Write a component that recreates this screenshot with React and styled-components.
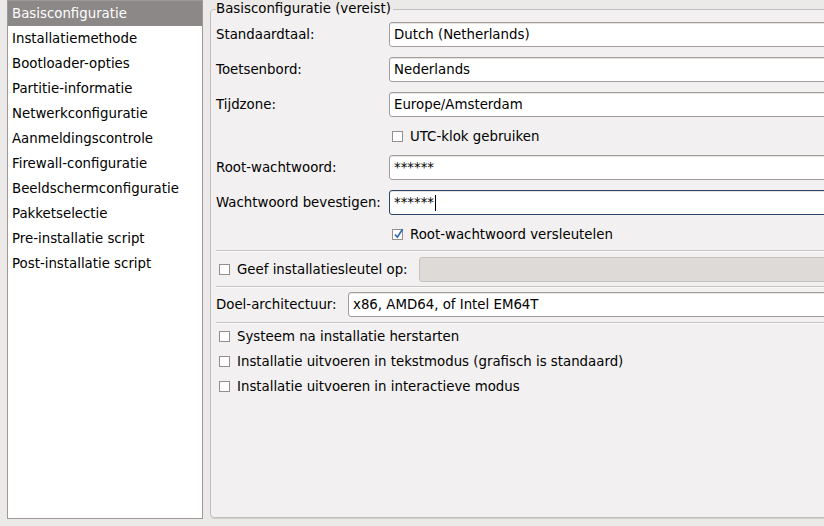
import React from 'react';
import styled, { createGlobalStyle } from 'styled-components';

const Global = createGlobalStyle`
  html, body { margin: 0; padding: 0; overflow: hidden; background: #eceae8; }
  body {
    font-family: "DejaVu Sans", "Liberation Sans", sans-serif;
    font-size: 13.33px;
    color: #000;
  }
  #root { width: 824px; height: 526px; overflow: hidden; }
`;

const Window = styled.div`
  display: flex;
  align-items: flex-start;
  gap: 7px;
  padding-left: 7px;
  width: 824px;
  height: 526px;
  box-sizing: border-box;
  overflow: hidden;
`;

const NavList = styled.ul`
  list-style: none;
  margin: 0;
  padding: 0;
  flex: none;
  width: 196px;
  height: 519px;
  box-sizing: border-box;
  background: #fff;
  border: 1px solid #9e9897;
`;

const NavItem = styled.li`
  height: 25px;
  line-height: 25px;
  padding-left: 4px;
  white-space: nowrap;
  background: ${p => (p.$selected ? '#8c8887' : 'transparent')};
  color: ${p => (p.$selected ? '#fff' : '#000')};
`;

const Frame = styled.fieldset`
  margin: 0;
  flex: none;
  width: 640px;
  height: 518px;
  box-sizing: border-box;
  border: 1px solid #c2bebc;
  border-radius: 4px;
  background: #f2f0f0;
  padding: 4px 0 0 5px;
  min-inline-size: auto;
  display: flex;
  flex-direction: column;
  box-shadow: 0 1px 0 #d2cfcd;
`;

const Legend = styled.legend`
  padding: 0 2px 0 0;
  margin: 0;
  line-height: 18px;
`;

const FormGrid = styled.div`
  display: grid;
  grid-template-columns: 173px 1fr;
  row-gap: 10px;
  align-items: center;
`;

const FieldLabel = styled.span`
  white-space: nowrap;
  flex: none;
  ${p => (p.$w ? `width: ${p.$w}px;` : '')}
`;

const TextField = styled.div`
  height: 25px;
  box-sizing: border-box;
  display: flex;
  align-items: center;
  padding-left: 4px;
  white-space: nowrap;
  border-radius: 3px;
  border: 1px solid ${p => (p.$focused ? '#2b4668' : p.$disabled ? '#c6c2c0' : '#a39e9c')};
  background: ${p => (p.$disabled ? '#dedad8' : '#fff')};
  box-shadow: ${p => (p.$disabled ? 'none' : 'inset 0 1px 0 #e6e3e1')};
  flex: 1;
  min-width: 0;
`;

const Caret = styled.span`
  display: inline-block;
  width: 1px;
  height: 16px;
  background: #000;
  margin-left: 1px;
`;

const CheckRow = styled.label`
  display: flex;
  align-items: center;
  gap: 7px;
  flex: none;
  height: ${p => p.$h ?? 25}px;
  white-space: nowrap;
  grid-column: ${p => (p.$inGrid ? '2' : 'auto')};
  ${p => (p.$w ? `width: ${p.$w}px;` : '')}
`;

const Box = styled.span`
  flex: none;
  width: 11px;
  height: 11px;
  margin-left: 3px;
  box-sizing: border-box;
  border: 1px solid #948f8e;
  background: #fff;
  position: relative;
  display: inline-block;
`;

const CheckMark = styled.svg`
  position: absolute;
  left: 0px;
  top: -2px;
  overflow: visible;
`;

const Separator = styled.div`
  height: 0;
  border-top: 1px solid #c8c4c2;
  border-bottom: 1px solid #fbfafa;
  margin: ${p => p.$m || '5px 0 5px 0'};
`;

const InlineRow = styled.div`
  display: flex;
  align-items: center;
  height: 25px;
  gap: ${p => p.$gap ?? 6}px;
  white-space: nowrap;
`;

const CheckGroup = styled.div`
  display: flex;
  flex-direction: column;
`;

function Checkbox({ checked, children, inGrid, h, w }) {
  return (
    <CheckRow $inGrid={inGrid} $h={h} $w={w}>
      <Box>
        {checked && (
          <CheckMark width="11" height="11" viewBox="0 0 11 11">
            <path d="M2 6.5 L4.3 9.2 L9.6 1.2" fill="none" stroke="#2f6bb3" strokeWidth="1.7" />
          </CheckMark>
        )}
      </Box>
      <span>{children}</span>
    </CheckRow>
  );
}

const navItems = [
  'Basisconfiguratie',
  'Installatiemethode',
  'Bootloader-opties',
  'Partitie-informatie',
  'Netwerkconfiguratie',
  'Aanmeldingscontrole',
  'Firewall-configuratie',
  'Beeldschermconfiguratie',
  'Pakketselectie',
  'Pre-installatie script',
  'Post-installatie script',
];

export default function App() {
  return (
    <>
      <Global />
      <Window>
        <NavList>
          {navItems.map((t, i) => (
            <NavItem key={t} $selected={i === 0}>{t}</NavItem>
          ))}
        </NavList>
        <Frame>
          <Legend>Basisconfiguratie (vereist)</Legend>
          <FormGrid>
            <FieldLabel>Standaardtaal:</FieldLabel>
            <TextField>Dutch (Netherlands)</TextField>
            <FieldLabel>Toetsenbord:</FieldLabel>
            <TextField>Nederlands</TextField>
            <FieldLabel>Tijdzone:</FieldLabel>
            <TextField>Europe/Amsterdam</TextField>
            <Checkbox inGrid h={18}>UTC-klok gebruiken</Checkbox>
            <FieldLabel>Root-wachtwoord:</FieldLabel>
            <TextField>******</TextField>
            <FieldLabel>Wachtwoord bevestigen:</FieldLabel>
            <TextField $focused>******<Caret /></TextField>
            <Checkbox inGrid h={18} checked>Root-wachtwoord versleutelen</Checkbox>
          </FormGrid>
          <Separator $m="7px 0 5px 0" />
          <InlineRow $gap={0}>
            <Checkbox w={203}>Geef installatiesleutel op:</Checkbox>
            <TextField $disabled />
          </InlineRow>
          <Separator $m="4px 0 4px 0" />
          <InlineRow $gap={0}>
            <FieldLabel $w={132}>Doel-architectuur:</FieldLabel>
            <TextField>x86, AMD64, of Intel EM64T</TextField>
          </InlineRow>
          <Separator $m="5px 0 0 0" />
          <CheckGroup>
            <Checkbox>Systeem na installatie herstarten</Checkbox>
            <Checkbox>Installatie uitvoeren in tekstmodus (grafisch is standaard)</Checkbox>
            <Checkbox>Installatie uitvoeren in interactieve modus</Checkbox>
          </CheckGroup>
        </Frame>
      </Window>
    </>
  );
}
